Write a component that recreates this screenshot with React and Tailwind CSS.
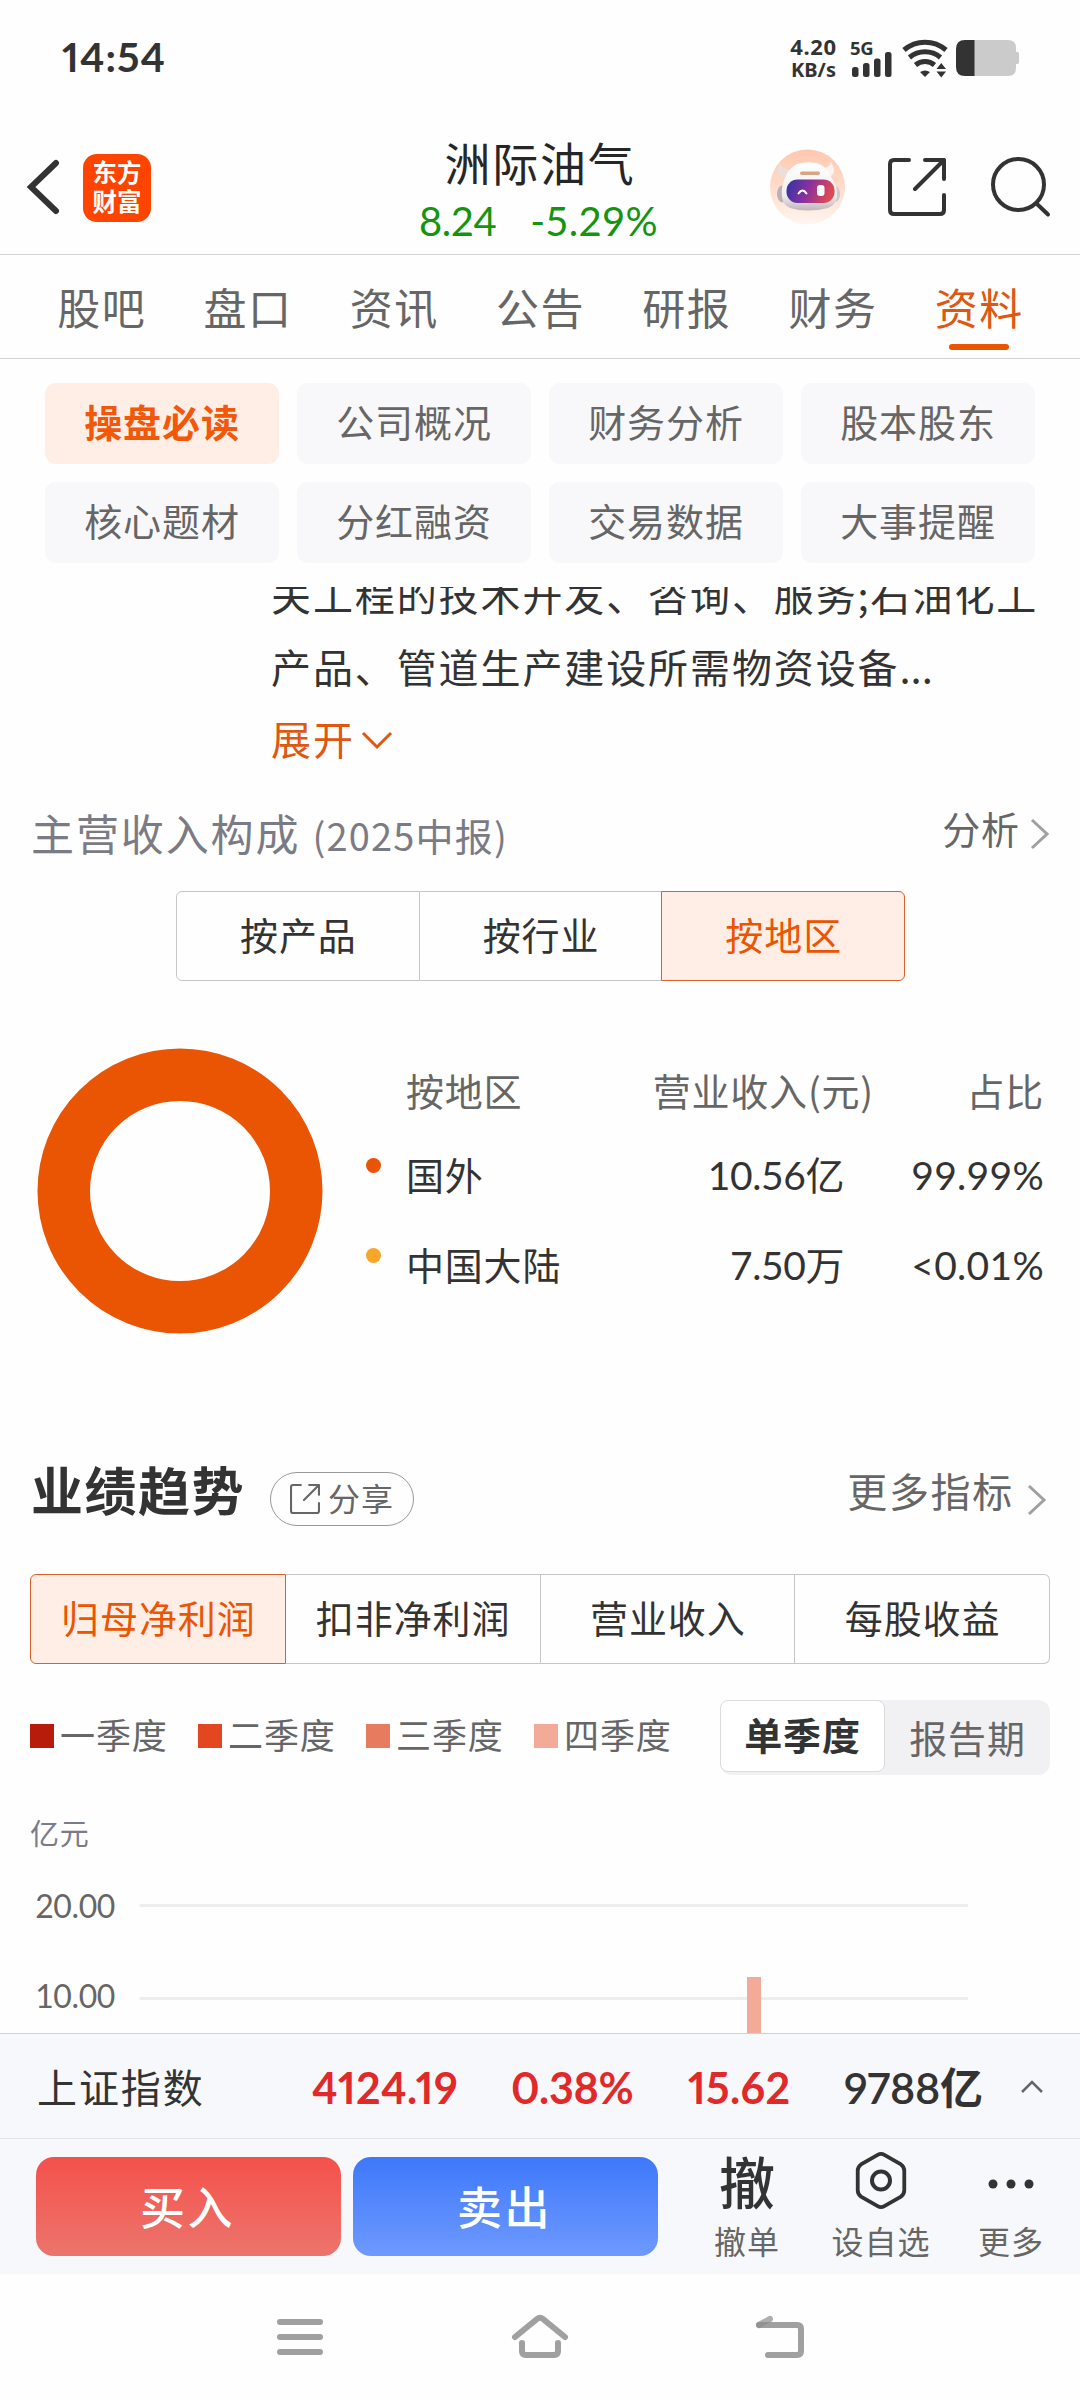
import { useState } from 'react';
import clsx from 'clsx';

const CJK = "font-['Noto_Sans_CJK_SC',sans-serif]";
const NUM = "font-['Lato','Noto_Sans_CJK_SC',sans-serif]";

const TABS = ['股吧', '盘口', '资讯', '公告', '研报', '财务', '资料'];
const SECTIONS = ['操盘必读', '公司概况', '财务分析', '股本股东', '核心题材', '分红融资', '交易数据', '大事提醒'];
const QUARTERS = [
  { label: '一季度', color: 'bg-[#b71c0a]' },
  { label: '二季度', color: 'bg-[#e2471f]' },
  { label: '三季度', color: 'bg-[#e67c5d]' },
  { label: '四季度', color: 'bg-[#f4aa98]' },
];
const REGIONS = [
  { name: '国外', income: '10.56亿', ratio: '99.99%', dot: 'bg-[#e95504]' },
  { name: '中国大陆', income: '7.50万', ratio: '<0.01%', dot: 'bg-[#f8a52c]' },
];

function StatusBar() {
  return (
    <div className="h-[115px] flex justify-between pl-[62px] pr-[60px] text-[#333]">
      <span className={`${NUM} proportional-nums mt-[33px] text-[41px] leading-[48px] font-bold tracking-[1px]`}>14:54</span>
      <div className="flex pt-[36px] h-[90px] font-['Noto_Sans',sans-serif] font-bold">
        <p className="w-[49px] -mt-px text-center text-[22px] leading-[22px] tracking-[0.6px]">
          4.20<br />
          <span className="text-[20px] tracking-[0]">KB/s</span>
        </p>
        <div className="ml-[12px] w-[46px]">
          <p className="text-[18.5px] leading-[24px] -mb-[8px] tracking-[-0.3px]">5G</p>
          <svg width="46" height="26" viewBox="0 0 46 26" fill="#333">
            <rect x="2" y="15" width="6.500" height="10" rx="2.5" />
            <rect x="13" y="11" width="6.500" height="14" rx="2.5" />
            <rect x="24" y="6.5" width="6.500" height="18.5" rx="2.5" />
            <rect x="35" y="0" width="6.500" height="25" rx="2.5" />
          </svg>
        </div>
        <svg className="ml-[6px]" width="48" height="44" viewBox="0 0 48 44" fill="none" stroke="#333" strokeWidth="5">
          <path d="M2 14a32 32 0 0 1 42 0" />
          <path d="M7.500 21.500a24 24 0 0 1 31 0" />
          <path d="M13.500 29a15 15 0 0 1 19 0" />
          <path d="M18 36q5-3 10 0l-5 5z" fill="#333" stroke="none" />
          <path d="M34.500 33h9.500l-4.750-6zM34.500 35.500h9.500l-4.750 6z" fill="#333" stroke="none" />
        </svg>
        <svg className="ml-[6px]" width="64" height="44" viewBox="0 0 64 44">
          <path d="M8 4H52q8 0 8 8v4h1.500q1.500 0 1.500 2v8q0 2-1.500 2H60v4q0 8-8 8H8z" fill="#cbcbcb" />
          <path d="M18.500 4H9q-9 0-9 9v18q0 9 9 9h9.500z" fill="#333" />
        </svg>
      </div>
    </div>
  );
}

function Robot() {
  return (
    <svg width="76" height="76" viewBox="0 0 76 76">
      <defs>
        <linearGradient id="halo" x1="0" y1="0" x2="0" y2="1">
          <stop offset="0" stopColor="#ffc8ae" />
          <stop offset="0.5" stopColor="#ffdccb" />
          <stop offset="1" stopColor="#fff6f1" />
        </linearGradient>
        <linearGradient id="visor" x1="0" y1="0" x2="1" y2="0.2">
          <stop offset="0" stopColor="#2a35a8" />
          <stop offset="0.5" stopColor="#8a2f9e" />
          <stop offset="1" stopColor="#dd4a55" />
        </linearGradient>
        <linearGradient id="shell" x1="0" y1="0" x2="0" y2="1">
          <stop offset="0" stopColor="#ffffff" />
          <stop offset="0.7" stopColor="#f1ecec" />
          <stop offset="1" stopColor="#bdb5b8" />
        </linearGradient>
      </defs>
      <circle cx="37.500" cy="38" r="37.500" fill="url(#halo)" />
      <path d="M10 14q-4 7-1 11 3 4 9 3l3-7q-9 0-11-7z" fill="#eadfdd" />
      <path d="M61 13q5 8 2 12-3 4-8 3l-5-8q9 0 11-7z" fill="#fbf3f1" />
      <ellipse cx="12.500" cy="45" rx="5.500" ry="8.500" fill="#b9b1b5" />
      <ellipse cx="65" cy="45" rx="5" ry="8" fill="#cfc7ca" />
      <path d="M14 32Q17 20 27 15Q36 12 47 14Q58 18 62 30Q68 38 67 48Q66 56 58 59Q37 64 20 59Q13 56 12 48Q11 38 14 32Z" fill="url(#shell)" />
      <rect x="30" y="22.500" width="20" height="3.500" rx="1.750" fill="#dba67f" />
      <rect x="16.500" y="30.500" width="48" height="23.500" rx="11" fill="url(#visor)" />
      <path d="M28.500 44.500q4-6 8 0" stroke="#fff" strokeWidth="2" fill="none" strokeLinecap="round" />
      <rect x="47" y="36" width="7.500" height="11" rx="3" fill="#fff" />
    </svg>
  );
}

function ShareIcon({ size, width }) {
  return (
    <svg width={size} height={size} viewBox="0 0 58 58" fill="none" stroke="currentColor" strokeWidth={width} strokeLinecap="round" strokeLinejoin="round">
      <path d="M21 2H6Q2 2 2 6V52Q2 56 6 56H52Q56 56 56 52V37" />
      <path d="M37 2H56V21M56 2L27 31" />
    </svg>
  );
}

function Header() {
  return (
    <header className="h-[140px] flex items-start relative border-b border-[#d2d2d2] text-[#333]">
      <svg className="ml-[26px] mt-[44px]" width="34" height="56" viewBox="0 0 34 56" fill="none" stroke="#333" strokeWidth="6" strokeLinecap="round">
        <path d="M30 4L5 28l25 24" />
      </svg>
      <p className="ml-[23px] mt-[39px] w-[68px] h-[68px] rounded-[14px] bg-[#ff4400] text-white text-center font-bold text-[24.5px] leading-[29px] pt-[3px]">
        东方<br />财富
      </p>
      <div className="absolute left-[340px] w-[400px] top-[19px] text-center">
        <h1 className="text-[46px] leading-[54px] tracking-[1.7px] text-[#262626]">洲际油气</h1>
        <p className={`${NUM} flex justify-center gap-[34px] text-[40px] leading-[48px] mt-[9px] pr-[3px] text-[#14940f]`}>
          <span className="tracking-[-0.5px]">8.24</span>
          <span className="tracking-[0.3px]">-5.29%</span>
        </p>
      </div>
      <div className="ml-auto mr-[28px] flex items-start">
        <div className="mt-[34px]"><Robot /></div>
        <div className="ml-[42px] mt-[43px]"><ShareIcon size={58} width={4} /></div>
        <svg className="ml-[44px] mt-[41px]" width="62" height="62" viewBox="0 0 62 62" fill="none" stroke="#333" strokeWidth="4" strokeLinecap="round">
          <circle cx="28.500" cy="28.500" r="25.500" />
          <path d="M47 48L58 58.500" />
        </svg>
      </div>
    </header>
  );
}

function Segmented({ items, active, onPick, className }) {
  return (
    <div className={clsx('flex h-[90px]', className)}>
      {items.map((item, i) => (
        <button
          key={item}
          onClick={() => onPick(i)}
          className={clsx(
            'flex-1 border text-[38px] leading-[56px] tracking-[0.9px] pb-[4px] pl-px',
            i === 0 && 'rounded-l-[6px]',
            i === items.length - 1 && 'rounded-r-[6px]',
            i > 0 && active !== i && 'border-l-0',
            active === i ? 'border-[#d9622a] bg-[#ffeee5] text-[#ea5504]' : 'border-[#c6c6c6] text-[#333]',
            active === i + 1 && 'border-r-0'
          )}
        >
          {item}
        </button>
      ))}
    </div>
  );
}

function Chevron({ className }) {
  return (
    <svg className={className} width="20" height="32" viewBox="0 0 20 32" fill="none" stroke="#a0a0a0" strokeWidth="3">
      <path d="M2 2l15 14L2 30" />
    </svg>
  );
}

function Income() {
  const [kind, setKind] = useState(2);
  return (
    <section>
      <div className="h-[91px] pl-[31px] pr-[30px] flex items-start">
        <h2 className="mt-[5px] text-[43px] leading-[54px] tracking-[1.9px] text-[#7b7b86]">主营收入构成</h2>
        <span className="ml-[12px] mt-[8px] text-[38px] leading-[54px] tracking-[1.2px] text-[#7b7b86]">(2025中报)</span>
        <span className="ml-auto mt-[1px] text-[38px] leading-[54px] tracking-[0.9px] text-[#666]">分析</span>
        <Chevron className="ml-[10px] mt-[18px]" />
      </div>
      <Segmented items={['按产品', '按行业', '按地区']} active={kind} onPick={setKind} className="ml-[176px] w-[729px]" />
      <div className="flex h-[457px] text-[38px] leading-[56px] tracking-[0.8px]">
        <svg className="ml-[37px] mt-[67px]" width="286" height="286" viewBox="0 0 286 286">
          <circle cx="143" cy="143" r="116.250" fill="none" stroke="#ea5504" strokeWidth="52.500" />
        </svg>
        <div className="ml-[43px] mt-[81px] w-[678px]">
          <div className="flex h-[85px] text-[#666]">
            <span className="ml-[40px]">按地区</span>
            <span className="ml-auto">营业收入(元)</span>
            <span className="w-[170px] text-right">占比</span>
          </div>
          {REGIONS.map(r => (
            <div key={r.name} className="flex h-[90px] text-[#333]">
              <i className={`w-[15px] h-[15px] mt-[11px] rounded-full ${r.dot}`} />
              <span className="ml-[25px] -mt-px">{r.name}</span>
              <span className={`${NUM} ml-auto text-right text-[39px] tracking-[-0.4px]`}>{r.income}</span>
              <span className={`${NUM} w-[200px] text-right text-[39px] tracking-[0.3px]`}>{r.ratio}</span>
            </div>
          ))}
        </div>
      </div>
    </section>
  );
}

function Trend() {
  const [metric, setMetric] = useState(0);
  const [single, setSingle] = useState(true);
  return (
    <section className="px-[30px]">
      <div className="h-[136px] flex items-start">
        <h2 className="ml-px mt-[19px] text-[52px] leading-[64px] font-bold tracking-[1.5px] text-[#333]">业绩趋势</h2>
        <div className="ml-[25px] mt-[34px] w-[144px] h-[54px] border border-[#999] rounded-full flex items-center justify-center gap-[8px] text-[#666]">
          <ShareIcon size={30} width={4} />
          <span className="text-[32px] leading-[40px] tracking-[1px] pb-[4px]">分享</span>
        </div>
        <span className="ml-auto mt-[25px] text-[40px] leading-[54px] tracking-[1.7px] text-[#666]">更多指标</span>
        <Chevron className="ml-[13px] mr-[3px] mt-[46px]" />
      </div>
      <Segmented items={['归母净利润', '扣非净利润', '营业收入', '每股收益']} active={metric} onPick={setMetric} />
      <div className="mt-[36px] h-[75px] flex items-start">
        {QUARTERS.map(q => (
          <div key={q.label} className="w-[168px] flex items-center mt-[8px] text-[35px] leading-[52px] tracking-[0.9px] text-[#666]">
            <i className={`w-[24px] h-[24px] mt-[4px] mr-[6px] ${q.color}`} />
            {q.label}
          </div>
        ))}
        <div className="ml-auto w-[330px] h-[75px] rounded-[12px] bg-[#f1f1f4] flex items-start text-[38px] leading-[56px] tracking-[0.9px]">
          <button
            onClick={() => setSingle(true)}
            className={clsx('w-[165px] h-[72px] pb-[5px]', single ? 'bg-white border border-[#dcdcdc] rounded-[8px] font-bold text-[#333]' : 'text-[#666]')}
          >
            单季度
          </button>
          <button
            onClick={() => setSingle(false)}
            className={clsx('w-[165px] h-[75px]', single ? 'text-[#666] pb-[2px]' : 'bg-white border border-[#dcdcdc] rounded-[8px] font-bold text-[#333]')}
          >
            报告期
          </button>
        </div>
      </div>
      <p className="mt-[36px] text-[29px] leading-[42px] tracking-[0.8px] text-[#7b7b86]">亿元</p>
      {/* the chart runs on beneath the bottom bar, only its top is in view */}
      <svg className={`${NUM} block`} width="1020" height="180" viewBox="0 0 1020 180" fill="#666">
        <path d="M109.500 52.500H938M109.500 145.500H938" stroke="#ededed" strokeWidth="3" />
        <text x="85" y="65" textAnchor="end" fontSize="32" letterSpacing="-0.4">20.00</text>
        <text x="85" y="155" textAnchor="end" fontSize="32" letterSpacing="-0.4">10.00</text>
        <rect x="717" y="124" width="14" height="56" fill="#f4aa98" />
      </svg>
    </section>
  );
}

function BottomBar() {
  return (
    <footer className="shrink-0 h-[241px] bg-[#f7f8fb]">
      <div className="h-[106px] border-t border-b border-t-[#d2d2d2] border-b-[#e2e3e6] flex items-center pl-[37px] pr-[36px] text-[#333]">
        <span className="w-[275px] text-[40px] leading-[56px] tracking-[1.9px]">上证指数</span>
        <div className={`${NUM} proportional-nums flex items-center pt-[3px] text-[43px] leading-[56px] font-bold tracking-[-0.3px]`}>
          <span className="w-[199px] text-[#e02a2a] tracking-[0.4px]">4124.19</span>
          <span className="w-[177px] text-[#e02a2a]">0.38%</span>
          <span className="w-[156px] text-[#e02a2a] tracking-[0.3px]">15.62</span>
          <span className="font-semibold">9788亿</span>
        </div>
        <svg className="ml-auto" width="24" height="16" viewBox="0 0 24 16" fill="none" stroke="#666" strokeWidth="2.500">
          <path d="M2 14L12 4l10 10" />
        </svg>
      </div>
      <div className="flex items-start pl-[36px] pt-[18px] text-[#333]">
        <button className="w-[305px] h-[99px] rounded-[18px] bg-linear-to-b from-[#f4504a] to-[#ec746d] text-white font-medium text-[45px] tracking-[2.5px] pb-[2px] pr-[2px]">买入</button>
        <button className="ml-[12px] w-[305px] h-[99px] rounded-[18px] bg-linear-to-b from-[#3d78fa] to-[#6e99ff] text-white font-medium text-[45px] tracking-[2.5px] pb-[2px] pr-[2px]">卖出</button>
        <div className="ml-[39px] w-[100px] flex flex-col items-center">
          <span className="-mt-[2px] h-[63px] text-[56px] leading-[50px] font-medium">撤</span>
          <span className="text-[32px] leading-[44px] tracking-[1px] text-[#666]">撤单</span>
        </div>
        <div className="ml-[24px] w-[120px] flex flex-col items-center">
          <svg className="h-[63px] -mt-[7px] mb-[5px]" width="56" height="63" viewBox="0 0 56 63" fill="none" stroke="#333" strokeWidth="4">
            <path d="M24.500 4Q28 2 31.500 4L49 14Q52.500 16.500 52.500 20.500V41Q52.500 45 49 47.500L31.500 57.500Q28 59.500 24.500 57.500L7 47.500Q3.500 45 3.500 41V20.500Q3.500 16.500 7 14Z" transform="translate(1.400 1) scale(.95 .96)" />
            <circle cx="28" cy="30.500" r="9" />
          </svg>
          <span className="text-[32px] leading-[44px] tracking-[1px] text-[#666]">设自选</span>
        </div>
        <div className="ml-[20px] w-[100px] flex flex-col items-center">
          <svg className="-mt-[2px]" width="48" height="63" viewBox="0 0 48 63" fill="#333">
            <circle cx="6" cy="29" r="4.500" />
            <circle cx="24" cy="29" r="4.500" />
            <circle cx="42" cy="29" r="4.500" />
          </svg>
          <span className="text-[32px] leading-[44px] tracking-[1px] text-[#666]">更多</span>
        </div>
      </div>
    </footer>
  );
}

function SystemNav() {
  return (
    <nav className="shrink-0 h-[126px] flex items-start justify-center gap-[180px] pt-[38px]">
      <svg width="60" height="50" viewBox="0 0 60 50" stroke="#a0a0a0" strokeWidth="6" strokeLinecap="round">
        <path d="M10 10H50M10 25H50M10 40H50" />
      </svg>
      <svg width="60" height="50" viewBox="0 0 60 50" fill="none" stroke="#a0a0a0" strokeWidth="6" strokeLinecap="round" strokeLinejoin="round">
        <path d="M5 25L27 7q3-2.500 6 0L55 25" />
        <path d="M12 31v8q0 4 4 4H44q4 0 4-4v-8" />
      </svg>
      <svg width="60" height="50" viewBox="0 0 60 50" fill="none" stroke="#a0a0a0" strokeWidth="6" strokeLinecap="round" strokeLinejoin="round">
        <path d="M9 13H47q4 0 4 4V39q0 4-4 4H18" />
        <path d="M20 7L9 13" stroke="#8c8c8c" strokeOpacity="0.7" />
      </svg>
    </nav>
  );
}

export default function App() {
  const [tab, setTab] = useState(6);
  const [section, setSection] = useState(0);

  return (
    <div className={`${CJK} w-[1080px] h-[2400px] bg-[#fefefe] flex flex-col overflow-hidden`}>
      <StatusBar />
      <Header />

      <nav className="h-[104px] shrink-0 px-[28px] flex border-b border-[#d2d2d2]">
        {TABS.map((t, i) => (
          <button key={t} onClick={() => setTab(i)} className={clsx('flex-1 flex flex-col items-center', tab === i ? 'text-[#e0570f]' : 'text-[#666]')}>
            <span className="mt-[24px] pl-px text-[43px] leading-[54px] tracking-[1.5px]">{t}</span>
            {tab === i && <i className="mt-[11px] w-[60px] h-[6px] rounded-full bg-[#ea5504]" />}
          </button>
        ))}
      </nav>

      <div className="shrink-0 grid grid-cols-4 gap-[18px] px-[45px] pt-[24px] pb-[24px]">
        {SECTIONS.map((s, i) => (
          <button
            key={s}
            onClick={() => setSection(i)}
            className={clsx(
              'h-[81px] rounded-[11px] text-[38px] leading-[56px] tracking-[0.9px] pb-[5px]',
              section === i ? 'bg-[#ffeee5] text-[#f2570a] font-bold' : 'bg-[#f8f8fa] text-[#666]'
            )}
          >
            {s}
          </button>
        ))}
      </div>

      <main className="flex-1 overflow-hidden">
        <div className="-mt-[29px] h-[242px] pl-[271px] text-[40px] leading-[72px] tracking-[1.9px] text-[#333] whitespace-nowrap">
          <p>关工程的技术开发、咨询、服务;石油化工</p>
          <p>产品、管道生产建设所需物资设备<span className="tracking-[0]">...</span></p>
          <p className="flex items-center text-[#e0570f]">
            展开
            <svg className="ml-[6px] mt-[6px]" width="32" height="20" viewBox="0 0 32 20" fill="none" stroke="#e0570f" strokeWidth="3">
              <path d="M2 2l14 14L30 2" />
            </svg>
          </p>
        </div>
        <Income />
        <Trend />
      </main>

      <BottomBar />
      <SystemNav />
    </div>
  );
}
